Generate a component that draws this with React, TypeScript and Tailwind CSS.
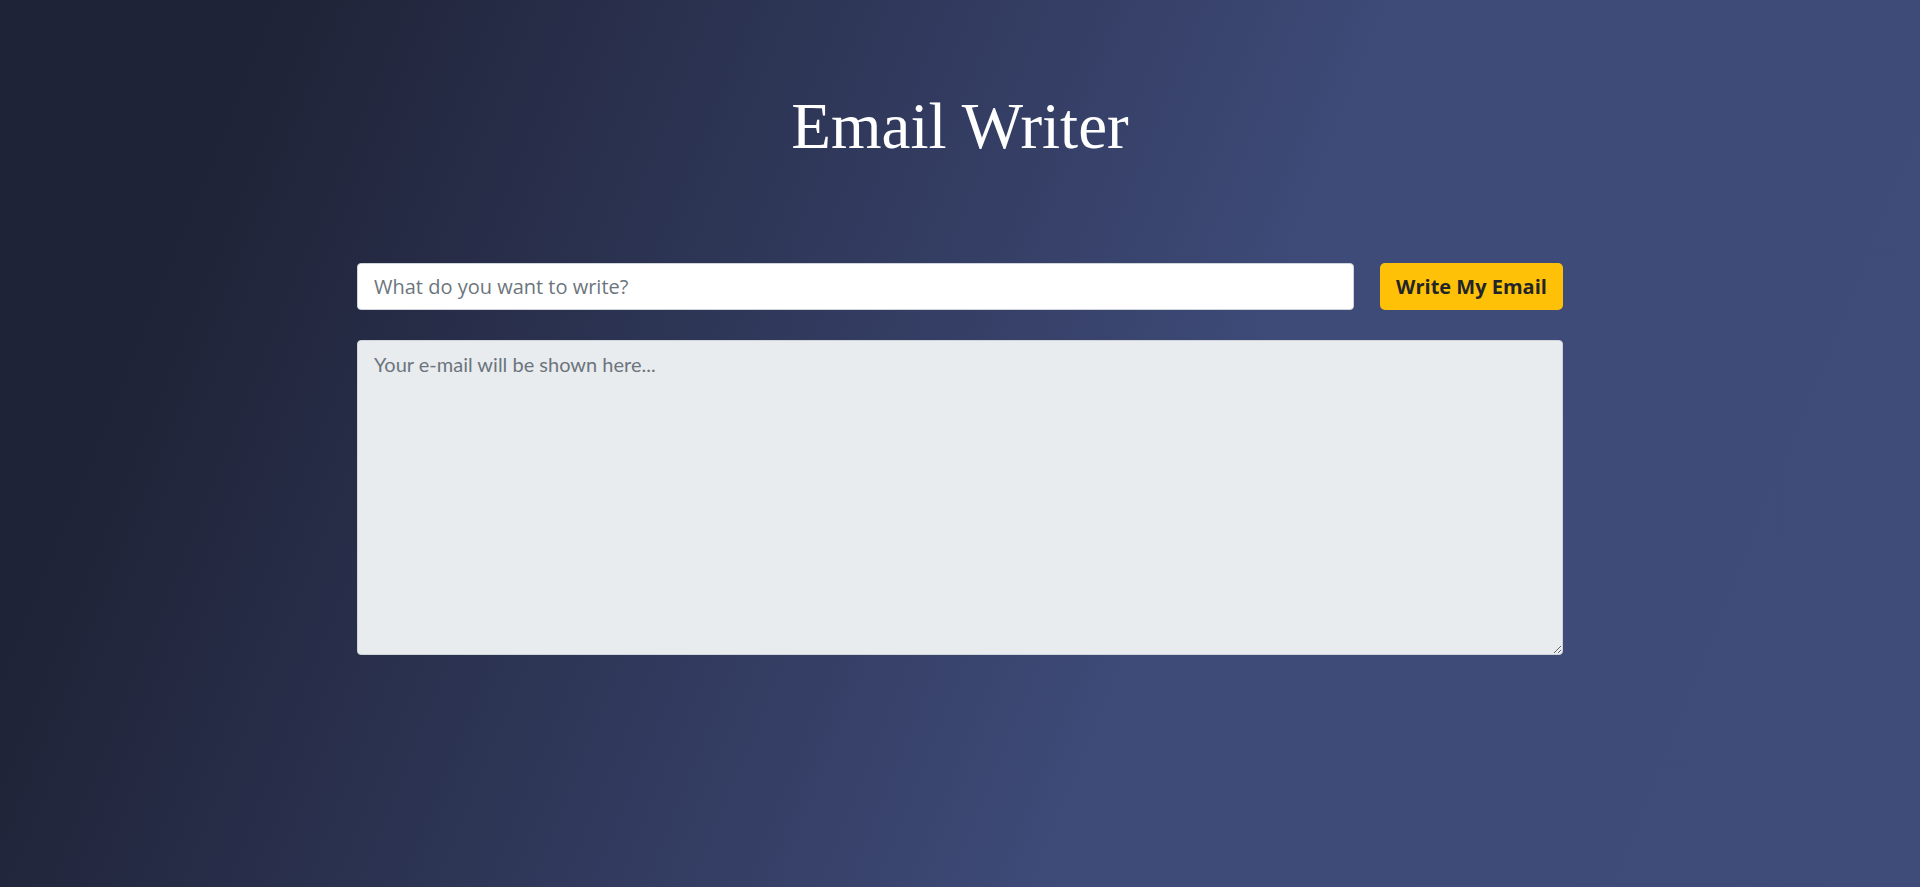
import React from "react";

export default function App() {
  return (
    <div
      className="min-h-screen w-full pt-[94px] bg-[linear-gradient(112deg,#1f2337_12%,#3e4a78_62%,#3f4b79_100%)]"
      style={{ minHeight: 887 }}
    >
      <h1 className="text-center text-white text-[65px] leading-none font-normal font-['Liberation_Serif',serif]">
        Email Writer
      </h1>
      <div className="mx-auto mt-[104px] w-[1206px]">
        <div className="flex gap-[26px]">
          <input
            type="text"
            placeholder="What do you want to write?"
            className="flex-1 h-[47px] rounded-[4px] border border-[#ced4da] bg-white px-4 text-[20px] text-[#212529] placeholder:text-[#6c757d] outline-none font-['Open_Sans',sans-serif]"
          />
          <button className="w-[183px] h-[47px] rounded-[5px] bg-[#ffc107] text-[#212529] text-[20px] font-bold font-['Open_Sans',sans-serif]">
            Write My Email
          </button>
        </div>
        <textarea
          placeholder="Your e-mail will be shown here..."
          className="block mt-[30px] w-full h-[315px] rounded-[4px] border border-[#ced4da] bg-[#e9ecef] px-4 py-2 text-[20px] leading-[1.5] text-[#212529] placeholder:text-[#6c757d] outline-none [font-family:Lato,sans-serif] placeholder:[font-family:Lato,sans-serif]"
        />
      </div>
    </div>
  );
}
